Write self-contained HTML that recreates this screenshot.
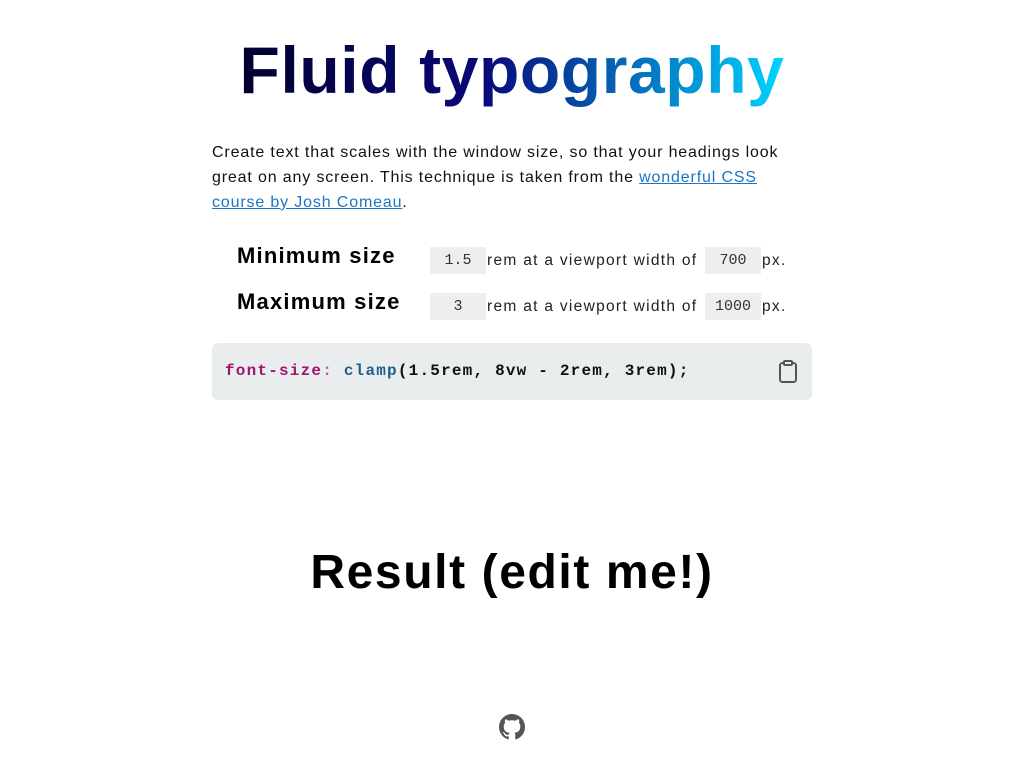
<!DOCTYPE html>
<html><head><style>
body{margin:0;background:#fff;font-family:"Liberation Sans",sans-serif;color:#111;}
h1{position:absolute;top:28px;left:0;width:1024px;text-align:center;margin:0;font-size:66px;font-weight:bold;letter-spacing:0.6px;line-height:84px;}
h1 span{background:linear-gradient(90deg,#03002e 0%,#090979 45%,#00d4ff 100%);-webkit-background-clip:text;background-clip:text;color:transparent;}
p{position:absolute;left:212px;top:140px;width:600px;margin:0;font-size:16px;line-height:25px;color:#111;letter-spacing:0.85px;}
a{color:#1c76c5;}
.row{position:absolute;left:237px;font-size:15.5px;color:#222;}
.row b{position:absolute;left:0;top:0;font-size:22px;color:#000;white-space:nowrap;letter-spacing:1.2px;}
.inp{position:absolute;background:#eceeef;height:27px;width:56px;font-family:"Liberation Mono",monospace;font-size:15px;text-align:center;line-height:27px;color:#333;}
.t{position:absolute;white-space:nowrap;line-height:27px;letter-spacing:1.3px;}
.code{position:absolute;left:212px;top:343px;width:600px;height:57px;background:#eaedee;border-radius:6px;font-family:"Liberation Mono",monospace;font-weight:bold;font-size:16px;line-height:57px;letter-spacing:1.2px;}
h2{position:absolute;top:540px;left:0;width:1024px;text-align:center;margin:0;font-size:48px;line-height:66px;font-weight:bold;color:#000;letter-spacing:1.6px;}
</style></head><body>
<h1><span>Fluid typography</span></h1>
<p>Create text that scales with the window size, so that your headings look great on any screen. This technique is taken from the <a href="#">wonderful CSS course by Josh Comeau</a>.</p>
<div class="row" style="top:243px"><b>Minimum size</b>
<div class="inp" style="left:193px;top:4px">1.5</div><div class="t" style="left:250px;top:4px">rem at a viewport width of</div>
<div class="inp" style="left:468px;top:4px">700</div><div class="t" style="left:525px;top:4px">px.</div></div>
<div class="row" style="top:289px"><b>Maximum size</b>
<div class="inp" style="left:193px;top:4px">3</div><div class="t" style="left:250px;top:4px">rem at a viewport width of</div>
<div class="inp" style="left:468px;top:4px">1000</div><div class="t" style="left:525px;top:4px">px.</div></div>
<div class="code"><span style="margin-left:13px;color:#a0166e">font-size</span><span style="color:#c0589a">:</span> <span style="color:#1b5f8c">clamp</span>(1.5rem, 8vw - 2rem, 3rem);
<svg style="position:absolute;left:566px;top:17px" width="20" height="24" viewBox="0 0 20 24"><rect x="2" y="3" width="16" height="19" rx="2.5" fill="none" stroke="#555" stroke-width="2"/><rect x="6" y="1" width="8" height="4" rx="1" fill="#eaedee" stroke="#555" stroke-width="2"/></svg></div>
<h2>Result (edit me!)</h2>
<svg style="position:absolute;left:499px;top:714px" width="26" height="26" viewBox="0 0 16 16"><path fill="#555" d="M8 0C3.58 0 0 3.58 0 8c0 3.54 2.29 6.53 5.47 7.59.4.07.55-.17.55-.38 0-.19-.01-.82-.01-1.49-2.01.37-2.53-.49-2.690-.94-.09-.23-.48-.94-.82-1.13-.28-.15-.68-.52-.01-.53.63-.01 1.08.58 1.23.82.72 1.21 1.87.87 2.33.66.07-.52.28-.87.51-1.07-1.78-.2-3.64-.89-3.64-3.95 0-.87.31-1.59.82-2.15-.08-.2-.36-1.02.08-2.12 0 0 .67-.21 2.2.82.64-.18 1.32-.27 2-.27.68 0 1.36.09 2 .27 1.53-1.04 2.2-.82 2.2-.82.44 1.1.16 1.92.08 2.12.51.56.82 1.27.82 2.15 0 3.07-1.87 3.75-3.65 3.95.29.25.54.73.54 1.48 0 1.07-.01 1.93-.01 2.2 0 .21.15.46.55.38A8.013 8.013 0 0016 8c0-4.42-3.58-8-8-8z"/></svg>
</body></html>
